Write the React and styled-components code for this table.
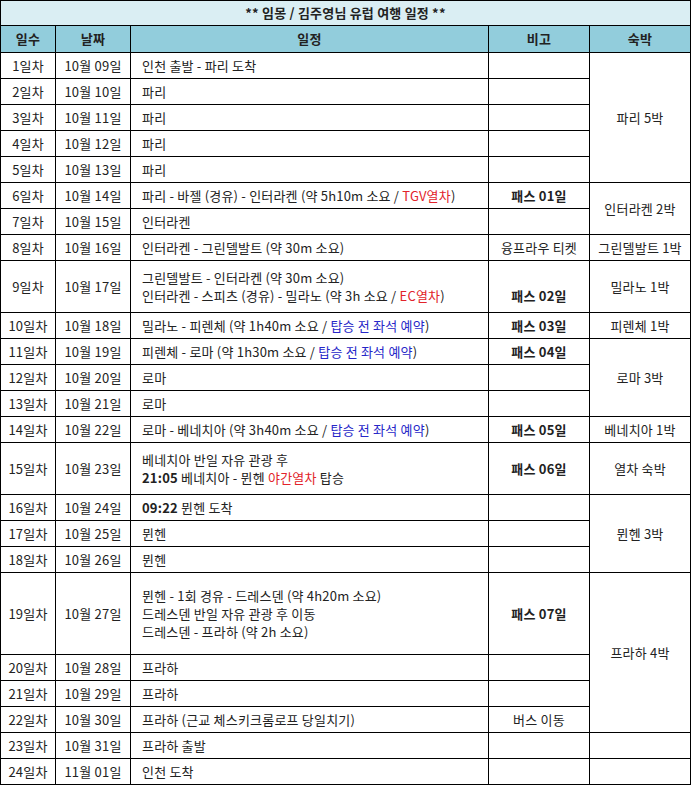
import React from "react";
import styled, { createGlobalStyle } from "styled-components";

const GlobalStyle = createGlobalStyle`
  body {
    margin: 0;
    background: #ffffff;
    font-family: "Noto Sans CJK KR", "Noto Sans", sans-serif;
    color: #222;
  }
`;

const Red = styled.span`
  color: #e2232a;
`;
const Blue = styled.span`
  color: #2626c8;
`;
const Strong = styled.span`
  font-weight: 700;
`;

// one entry per day; stay.span > 1 means the 숙박 cell spans rows
const rows = [
  { day: "1일차", date: "10월 09일", plan: ["인천 출발 - 파리 도착"], stay: { text: "파리 5박", span: 5 } },
  { day: "2일차", date: "10월 10일", plan: ["파리"] },
  { day: "3일차", date: "10월 11일", plan: ["파리"] },
  { day: "4일차", date: "10월 12일", plan: ["파리"] },
  { day: "5일차", date: "10월 13일", plan: ["파리"] },
  {
    day: "6일차",
    date: "10월 14일",
    plan: [<>파리 - 바젤 (경유) - 인터라켄 (약 5h10m 소요 / <Red>TGV열차</Red>)</>],
    note: "패스 01일",
    bold: true,
    stay: { text: "인터라켄 2박", span: 2 },
  },
  { day: "7일차", date: "10월 15일", plan: ["인터라켄"] },
  {
    day: "8일차",
    date: "10월 16일",
    plan: ["인터라켄 - 그린델발트 (약 30m 소요)"],
    note: "융프라우 티켓",
    stay: { text: "그린델발트 1박", span: 1 },
  },
  {
    day: "9일차",
    date: "10월 17일",
    lines: 2,
    plan: [
      "그린델발트 - 인터라켄 (약 30m 소요)",
      <>인터라켄 - 스피츠 (경유) - 밀라노 (약 3h 소요 / <Red>EC열차</Red>)</>,
    ],
    note: "패스 02일",
    bold: true,
    lowNote: true,
    stay: { text: "밀라노 1박", span: 1 },
  },
  {
    day: "10일차",
    date: "10월 18일",
    plan: [<>밀라노 - 피렌체 (약 1h40m 소요 / <Blue>탑승 전 좌석 예약</Blue>)</>],
    note: "패스 03일",
    bold: true,
    stay: { text: "피렌체 1박", span: 1 },
  },
  {
    day: "11일차",
    date: "10월 19일",
    plan: [<>피렌체 - 로마 (약 1h30m 소요 / <Blue>탑승 전 좌석 예약</Blue>)</>],
    note: "패스 04일",
    bold: true,
    stay: { text: "로마 3박", span: 3 },
  },
  { day: "12일차", date: "10월 20일", plan: ["로마"] },
  { day: "13일차", date: "10월 21일", plan: ["로마"] },
  {
    day: "14일차",
    date: "10월 22일",
    plan: [<>로마 - 베네치아 (약 3h40m 소요 / <Blue>탑승 전 좌석 예약</Blue>)</>],
    note: "패스 05일",
    bold: true,
    stay: { text: "베네치아 1박", span: 1 },
  },
  {
    day: "15일차",
    date: "10월 23일",
    lines: 2,
    plan: [
      "베네치아 반일 자유 관광 후",
      <><Strong>21:05</Strong> 베네치아 - 뮌헨 <Red>야간열차</Red> 탑승</>,
    ],
    note: "패스 06일",
    bold: true,
    stay: { text: "열차 숙박", span: 1 },
  },
  {
    day: "16일차",
    date: "10월 24일",
    plan: [<><Strong>09:22</Strong> 뮌헨 도착</>],
    stay: { text: "뮌헨 3박", span: 3 },
  },
  { day: "17일차", date: "10월 25일", plan: ["뮌헨"] },
  { day: "18일차", date: "10월 26일", plan: ["뮌헨"] },
  {
    day: "19일차",
    date: "10월 27일",
    lines: 3,
    plan: [
      "뮌헨 - 1회 경유 - 드레스덴 (약 4h20m 소요)",
      "드레스덴 반일 자유 관광 후 이동",
      "드레스덴 - 프라하 (약 2h 소요)",
    ],
    note: "패스 07일",
    bold: true,
    stay: { text: "프라하 4박", span: 4 },
  },
  { day: "20일차", date: "10월 28일", plan: ["프라하"] },
  { day: "21일차", date: "10월 29일", plan: ["프라하"] },
  { day: "22일차", date: "10월 30일", plan: ["프라하 (근교 체스키크롬로프 당일치기)"], note: "버스 이동" },
  { day: "23일차", date: "10월 31일", plan: ["프라하 출발"], stay: { text: "", span: 1 } },
  { day: "24일차", date: "11월 01일", plan: ["인천 도착"], stay: { text: "", span: 1 } },
];

const rowHeight = { 1: 26, 2: 52, 3: 82 };

const App = () => {
  return (
    <>
      <GlobalStyle />
      <Table>
        <colgroup>
          <col style={{ width: 55 }} />
          <col style={{ width: 75 }} />
          <col style={{ width: 358 }} />
          <col style={{ width: 101 }} />
          <col style={{ width: 101 }} />
        </colgroup>
        <thead>
          <tr>
            <TitleCell colSpan={5}>** 임몽 / 김주영님 유럽 여행 일정 **</TitleCell>
          </tr>
          <tr>
            <HeadCell>일수</HeadCell>
            <HeadCell>날짜</HeadCell>
            <HeadCell>일정</HeadCell>
            <HeadCell>비고</HeadCell>
            <HeadCell>숙박</HeadCell>
          </tr>
        </thead>
        <tbody>
          {rows.map((row) => (
            <Row key={row.day} $h={rowHeight[row.lines || 1]}>
              <Cell>{row.day}</Cell>
              <Cell>{row.date}</Cell>
              <PlanCell>
                {row.plan.map((line, i) => (
                  <PlanLine key={i}>{line}</PlanLine>
                ))}
              </PlanCell>
              <Cell $bold={row.bold}>
                {row.lowNote && <PlanLine>&nbsp;</PlanLine>}
                {row.note || ""}
              </Cell>
              {row.stay && <Cell rowSpan={row.stay.span}>{row.stay.text}</Cell>}
            </Row>
          ))}
        </tbody>
      </Table>
    </>
  );
};

export default App;

const Table = styled.table`
  width: 690px;
  border-collapse: collapse;
  table-layout: fixed;
  font-size: 13px;
  line-height: 18px;
  letter-spacing: 0.2px;
`;

const TitleCell = styled.th`
  height: 24px;
  padding: 0;
  border: 1px solid #000;
  background-color: #daeef3;
  font-weight: 700;
  text-align: center;
  color: #222;
`;

const HeadCell = styled.th`
  height: 26px;
  padding: 0;
  border: 1px solid #000;
  background-color: #92cddc;
  font-weight: 700;
  text-align: center;
  color: #222;
`;

const Row = styled.tr`
  height: ${(p) => p.$h}px;
`;

const Cell = styled.td`
  padding: 0 2px;
  border: 1px solid #000;
  text-align: center;
  vertical-align: middle;
  white-space: nowrap;
  font-weight: ${(p) => (p.$bold ? 700 : 400)};
`;

const PlanCell = styled.td`
  padding: 0 0 0 11px;
  border: 1px solid #000;
  text-align: left;
  vertical-align: middle;
  white-space: nowrap;
`;

const PlanLine = styled.div`
  line-height: 18px;
`;
